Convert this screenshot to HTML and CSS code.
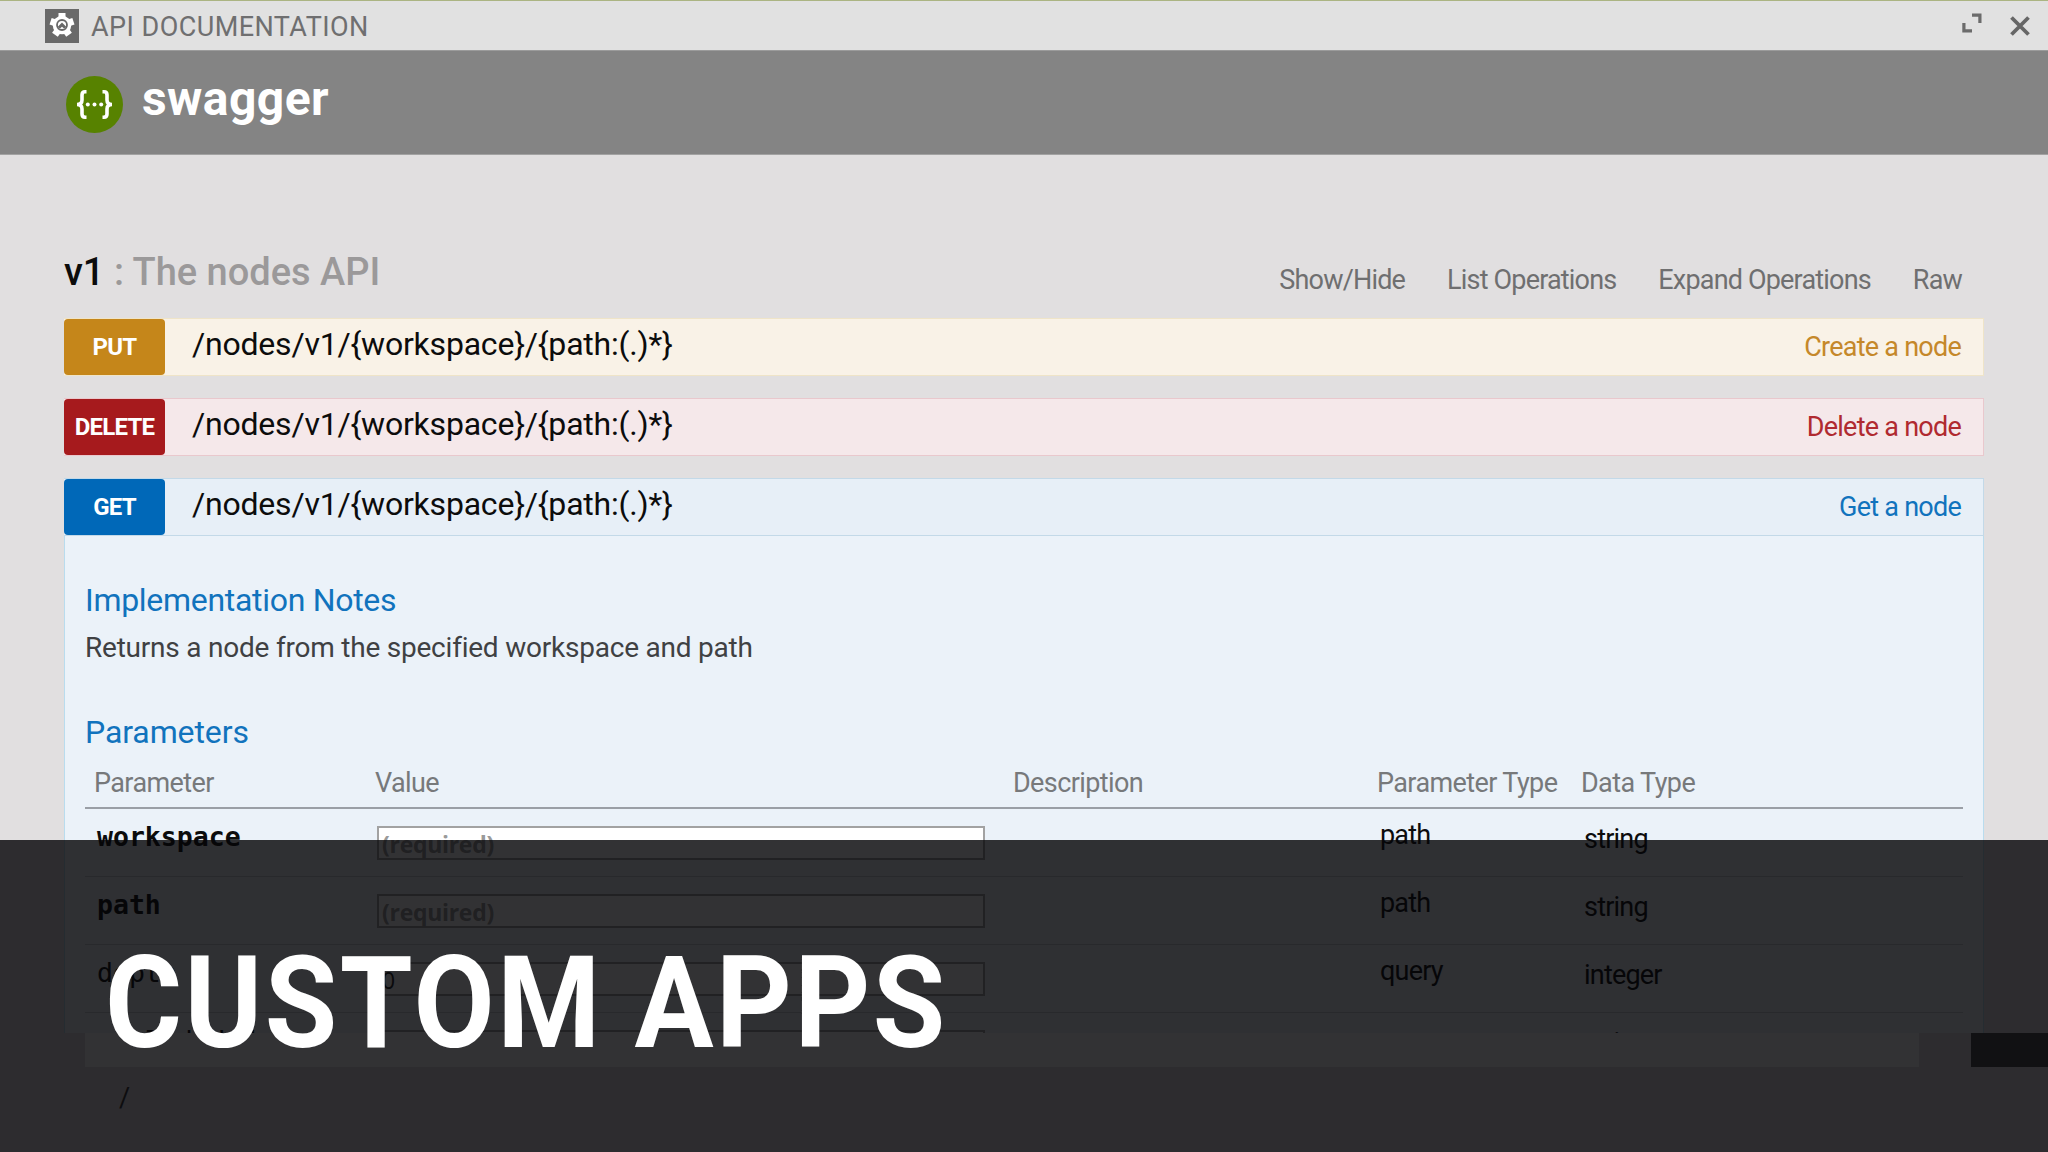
FILE: index.html
```
<!DOCTYPE html>
<html lang="en">
<head>
    <meta charset="UTF-8">
    <meta name="viewport" content="width=device-width, initial-scale=1.0">
    <title>API Documentation</title>
    <link rel="stylesheet" href="styles.css">
</head>
<body>
    <header class="app-bar">
        <svg class="app-icon" width="34" height="34" viewBox="0 0 34 34">
            <rect width="34" height="34" fill="#696969"/>
            <circle cx="17" cy="16" r="9.300" fill="#fff"/>
            <g fill="none" stroke="#fff" stroke-width="7">
                <path id="tooth" d="M17 16 V4"/>
                <path d="M17 16 V4" transform="rotate(72 17 16)"/>
                <path d="M17 16 V4" transform="rotate(144 17 16)"/>
                <path d="M17 16 V4" transform="rotate(216 17 16)"/>
                <path d="M17 16 V4" transform="rotate(288 17 16)"/>
            </g>
            <circle cx="17" cy="16" r="5" fill="none" stroke="#696969" stroke-width="1.800"/>
            <path d="M12.500 18 L17 13.500 L21.500 18 L19 19.500 L17 17.800 L15 19.500 Z" fill="#696969"/>
        </svg>
        <span class="app-title">API DOCUMENTATION</span>
        <div class="app-actions">
            <svg width="20" height="20" viewBox="0 0 20 20" fill="none" stroke="#6b6b6b" stroke-width="3.200">
                <path d="M10 2.100 H17.900 V10"/>
                <path d="M1.900 10 V17.900 H10"/>
            </svg>
            <svg width="20" height="20" viewBox="0 0 20 20" stroke="#666" stroke-width="3.800">
                <path d="M1.500 1.500 L18.500 18.500 M18.500 1.500 L1.500 18.500"/>
            </svg>
        </div>
    </header>

    <div class="swagger-bar">
        <svg width="58" height="58" viewBox="0 0 58 58">
            <circle cx="28.500" cy="28.500" r="28.500" fill="#578200"/>
            <g fill="none" stroke="#fff" stroke-width="3.600">
                <path d="M20.500 15.800 H19 Q16 15.800 16 19 V24 Q16 28.500 11 28.500 Q16 28.500 16 33 V38 Q16 41.200 19 41.200 H20.500"/>
                <path d="M36.500 15.800 H38 Q41 15.800 41 19 V24 Q41 28.500 46 28.500 Q41 28.500 41 33 V38 Q41 41.200 38 41.200 H36.500"/>
            </g>
            <g fill="#fff">
                <circle cx="21.800" cy="28.500" r="2"/>
                <circle cx="28.500" cy="28.500" r="2"/>
                <circle cx="35.200" cy="28.500" r="2"/>
            </g>
        </svg>
        <span class="brand">swagger</span>
    </div>

    <main>
        <div class="resource-heading">
            <h2>v1 <span>: The nodes API</span></h2>
            <ul class="options">
                <li>Show/Hide</li>
                <li>List Operations</li>
                <li>Expand Operations</li>
                <li>Raw</li>
            </ul>
        </div>

        <div class="operation put">
            <span class="method">PUT</span>
            <span class="path">/nodes/v1/{workspace}/{path:(.)*}</span>
            <span class="summary">Create a node</span>
        </div>
        <div class="operation delete">
            <span class="method">DELETE</span>
            <span class="path">/nodes/v1/{workspace}/{path:(.)*}</span>
            <span class="summary">Delete a node</span>
        </div>
        <div class="operation get">
            <span class="method">GET</span>
            <span class="path">/nodes/v1/{workspace}/{path:(.)*}</span>
            <span class="summary">Get a node</span>
        </div>

        <section class="content">
            <h4>Implementation Notes</h4>
            <p>Returns a node from the specified workspace and path</p>
            <h4>Parameters</h4>
            <div class="params">
                <div class="row head">
                    <span>Parameter</span>
                    <span>Value</span>
                    <span>Description</span>
                    <span>Parameter Type</span>
                    <span>Data Type</span>
                </div>
                <div class="row required">
                    <span class="name">workspace</span>
                    <span class="value"><span class="field">(required)</span></span>
                    <span></span>
                    <span class="type">path</span>
                    <span class="data">string</span>
                </div>
                <div class="row required">
                    <span class="name">path</span>
                    <span class="value"><span class="field">(required)</span></span>
                    <span></span>
                    <span class="type">path</span>
                    <span class="data">string</span>
                </div>
                <div class="row">
                    <span class="name">depth</span>
                    <span class="value"><span class="field filled">0</span></span>
                    <span></span>
                    <span class="type">query</span>
                    <span class="data">integer</span>
                </div>
                <div class="row">
                    <span class="name">excludeNodeTypes</span>
                    <span class="value"><span class="field"></span></span>
                    <span></span>
                    <span class="type"></span>
                    <span class="data">string</span>
                </div>
            </div>
        </section>
    </main>

    <div class="status">
        <div class="status-track"></div>
        <div class="status-end"></div>
    </div>
    <div class="prompt">/</div>

    <div class="caption">
        <h1>CUSTOM APPS</h1>
    </div>
</body>
</html>
```
FILE: styles.css
```
:root {
    --page: #e1dfe0;
    --gray: #6f6f70;
    --blue: #1173bd;
}

* {
    margin: 0;
    padding: 0;
    box-sizing: border-box;
}

body {
    position: relative;
    height: 1152px;
    overflow: hidden;
    background: var(--page);
    color: #0c0c0c;
    font-family: Roboto, sans-serif;
}

.app-bar {
    display: flex;
    align-items: center;
    height: 51px;
    padding: 0 18px 0 45px;
    border-top: 1px solid #abb482;
    border-bottom: 1px solid #9b9b9b;
    background: #e1e1e1;
}

.app-title {
    margin: 3px 0 0 12px;
    color: var(--gray);
    font-size: 27px;
    line-height: 30px;
    letter-spacing: 0.45px;
}

.app-actions {
    display: flex;
    gap: 28px;
    margin-left: auto;
}

.app-actions svg:first-child {
    margin-top: -3px;
}

.swagger-bar {
    display: flex;
    align-items: flex-start;
    height: 104px;
    padding: 25px 0 0 66px;
    border-bottom: 1px solid #a2a2a2;
    background: #848484;
}

.brand {
    margin-left: 18px;
    color: #fff;
    font-size: 48px;
    font-weight: 700;
    line-height: 46px;
    letter-spacing: 0.44px;
}

main {
    padding: 0 64px;
}

.resource-heading {
    display: flex;
    justify-content: space-between;
    align-items: flex-end;
    height: 163px;
}

.resource-heading h2 {
    margin-bottom: 27px;
    font-size: 38px;
    font-weight: 500;
    line-height: 38px;
}

.resource-heading h2 span {
    color: #9b999a;
}

.options {
    display: flex;
    gap: 42px;
    margin: 0 22px 24px 0;
    list-style: none;
    color: var(--gray);
    font-size: 27px;
    line-height: 28px;
    letter-spacing: -0.82px;
}

.operation {
    display: flex;
    align-items: center;
    height: 58px;
    margin-bottom: 22px;
    padding-right: 22px;
    border: 1px solid;
    border-left: 0;
}

.method {
    width: 101px;
    border-radius: 4px;
    color: #fff;
    font-size: 24px;
    font-weight: 700;
    line-height: 56px;
    letter-spacing: -0.8px;
    text-align: center;
}

.path {
    margin: -6px 0 0 27px;
    font-size: 32px;
    letter-spacing: -0.21px;
}

.summary {
    margin: -1px 0 0 auto;
    font-size: 27px;
    letter-spacing: -0.75px;
}

.put {
    border-color: #efe4c8;
    background: #f9f2e7;
}

.put .method {
    background: #c5861a;
}

.put .summary {
    color: #c5882a;
}

.delete {
    border-color: #e9c8cd;
    background: #f5e8ea;
}

.delete .method {
    background: #a61a1d;
}

.delete .summary {
    color: #b02a30;
}

.get {
    margin-bottom: 0;
    border-color: #c3d9e8;
    background: #e7eff7;
}

.get .method {
    background: #0068b8;
}

.get .summary {
    color: var(--blue);
}

.content {
    height: 497px;
    padding: 44px 20px 0;
    border: solid #b9dcee;
    border-width: 0 1px;
    background: #ebf2f9;
    overflow: hidden;
}

.content h4 {
    color: var(--blue);
    font-size: 32px;
    font-weight: 400;
    line-height: 40px;
    letter-spacing: -0.1px;
}

.content h4:first-child {
    letter-spacing: -0.3px;
}

.content p {
    margin: 10px 0 46px;
    color: #3f4143;
    font-size: 28px;
    line-height: 36px;
    letter-spacing: -0.22px;
}

.row {
    display: grid;
    grid-template-columns: 282px 637px 364px 204px 1fr;
    height: 68px;
    border-bottom: 1px solid #c6ccd2;
    font-size: 27px;
    line-height: 30px;
    letter-spacing: -0.8px;
}

.row > span {
    padding-left: 12px;
}

.row.head {
    height: 57px;
    border-bottom: 2px solid #9a9fa6;
    color: #77797b;
    line-height: 28px;
    letter-spacing: -0.6px;
}

.row.head > span {
    padding: 17px 0 0 9px;
}

.row.head > span:nth-child(2) {
    padding-left: 8px;
}

.name {
    padding-top: 13px;
    font-family: "DejaVu Sans Mono", monospace;
    font-size: 26.5px;
    letter-spacing: 0;
}

.required .name {
    font-weight: 700;
}

.row > .value {
    padding: 17px 0 0 10px;
}

.field {
    display: block;
    width: 608px;
    height: 34px;
    padding-left: 3px;
    border: 2px solid #a2a2a2;
    background: #fff;
    color: #9a9a9a;
    font: 700 23px/32px "Open Sans", sans-serif;
    letter-spacing: -0.3px;
}

.field.filled {
    color: #222;
    font-weight: 400;
}

.type {
    padding-top: 11px;
}

.data {
    padding-top: 15px;
}

.status {
    display: flex;
    justify-content: space-between;
    height: 34px;
    padding-left: 85px;
}

.status-track {
    width: 1834px;
    background: #fff;
}

.status-end {
    width: 77px;
    background: #484848;
}

.prompt {
    padding: 16px 0 0 119px;
    font-size: 27px;
    line-height: 30px;
    color: #333;
}

/* title band over the lower part of the page */
.caption {
    position: absolute;
    right: 0;
    bottom: 0;
    left: 0;
    height: 312px;
    padding: 99px 0 0 105px;
    background: rgba(5, 5, 7, 0.82);
}

.caption h1 {
    color: #fff;
    font-size: 128px;
    font-weight: 700;
    line-height: 128px;
    letter-spacing: 2.7px;
    transform: scaleX(0.92);
    transform-origin: left;
}
```
